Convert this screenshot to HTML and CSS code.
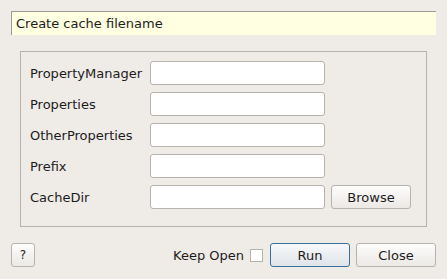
FILE: index.html
```html
<!DOCTYPE html>
<html lang="en">
<head>
    <meta charset="UTF-8">
    <title>Create cache filename</title>
    <link rel="stylesheet" href="styles.css">
</head>
<body>
    <div class="dialog">
        <div class="description">Create cache filename</div>
        <div class="group">
            <label>PropertyManager</label>
            <input type="text">
            <span></span>
            <label>Properties</label>
            <input type="text">
            <span></span>
            <label>OtherProperties</label>
            <input type="text">
            <span></span>
            <label>Prefix</label>
            <input type="text">
            <span></span>
            <label>CacheDir</label>
            <input type="text">
            <button class="btn">Browse</button>
        </div>
        <div class="footer">
            <button class="btn help">?</button>
            <span class="spacer"></span>
            <label class="keep">Keep Open <span class="check"></span></label>
            <button class="btn run">Run</button>
            <button class="btn">Close</button>
        </div>
    </div>
</body>
</html>
```

FILE: styles.css
```css
body {
    margin: 0;
    background-color: #efebe7;
    font-family: "DejaVu Sans", sans-serif;
    font-size: 13px;
    color: #1c1c1c;
}

.dialog {
    width: 447px;
    height: 279px;
    box-sizing: border-box;
    padding: 11px;
}

.description {
    height: 24px;
    box-sizing: border-box;
    padding: 4px 0 0 4px;
    background-color: #ffffe1;
    border-top: 1px solid #9c9893;
    border-left: 1px solid #9c9893;
    width: 425px;
}

.group {
    margin: 16px 9px 0 9px;
    height: 176px;
    box-sizing: border-box;
    border: 1px solid #b6b2ad;
    padding: 9px 9px 0 9px;
    display: grid;
    grid-template-columns: 114px 175px 80px;
    grid-auto-rows: 24px;
    row-gap: 7px;
    column-gap: 6px;
    align-items: center;
}

.group label {
    padding-top: 1px;
}

.group input {
    width: 175px;
    height: 24px;
    box-sizing: border-box;
    border: 1px solid #b6b2ad;
    border-radius: 3px;
    background: #fff;
    margin: 0;
    outline: none;
}

.btn {
    height: 24px;
    box-sizing: border-box;
    border: 1px solid #b6b2ad;
    border-radius: 3px;
    background: linear-gradient(#fdfdfc, #ebe8e5);
    font-family: "DejaVu Sans", sans-serif;
    font-size: 13px;
    color: #1c1c1c;
    padding: 0;
    width: 80px;
}

.footer {
    margin-top: 16px;
    display: flex;
    align-items: center;
}

.help {
    width: 24px;
    font-size: 12px;
}

.spacer {
    flex: 1;
}

.keep {
    display: flex;
    align-items: center;
    gap: 6px;
    margin-right: 7px;
}

.check {
    width: 13px;
    height: 13px;
    box-sizing: border-box;
    border: 1px solid #b6b2ad;
    background: #fff;
}

.run {
    border-color: #3a6f9d;
    background: linear-gradient(#f7f8f9, #dfe4e9);
    margin-right: 6px;
}
```
